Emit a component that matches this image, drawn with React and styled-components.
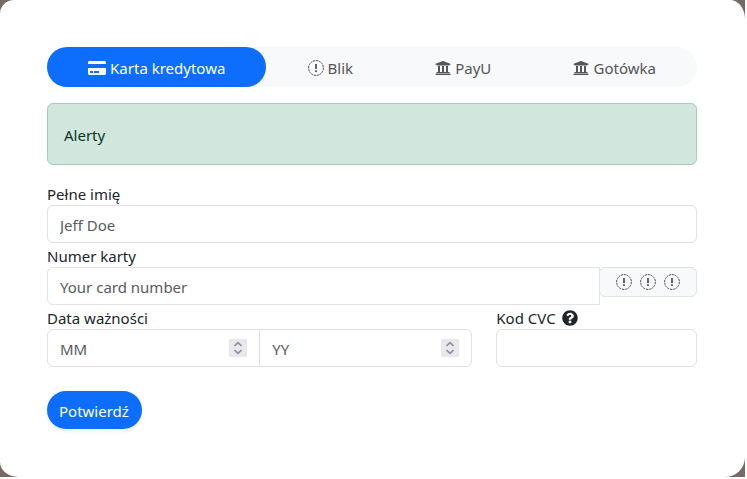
import React from "react";
import styled, { createGlobalStyle } from "styled-components";
import { FaCreditCard, FaUniversity, FaQuestionCircle } from "react-icons/fa";

const GlobalStyle = createGlobalStyle`
  *, *::before, *::after { box-sizing: border-box; }
  body {
    margin: 0;
    background: #fff;
    color: #212529;
    font: 15px/24px "Noto Sans", "Segoe UI", sans-serif;
  }
  button, input { font: inherit; color: inherit; }
`;

const Page = styled.div`
  margin-right: 2px;
  background: #796965;
`;

const Card = styled.main`
  padding: 47px 48px 48px 47px;
  background: #fff;
  border-radius: 14px 15px 20px 18px / 14px 19px 20px 15px;
`;

const Tabs = styled.nav`
  display: flex;
  margin-bottom: 16px;
  border-radius: 20px;
  background: #f8f9fa;
`;

const Tab = styled.button`
  flex: 1 1 auto;
  display: flex;
  align-items: center;
  justify-content: center;
  gap: 4px;
  padding: 9px 16px 7px;
  border: 0;
  border-radius: 20px;
  background: ${(p) => (p.$active ? "#0d6efd" : "transparent")};
  color: ${(p) => (p.$active ? "#fff" : "#555")};
  cursor: pointer;
  svg { flex: none; }
`;

const Alert = styled.div`
  margin-bottom: 16px;
  padding: 19px 16px 17px;
  border: 1px solid #a3cfbb;
  border-radius: 6px;
  background: #d1e7dd;
  color: #0a3622;
`;

const Label = styled.label`
  display: flex;
  align-items: center;
  gap: 6px;
  height: 24px;
  padding-top: 2px;
`;

const Input = styled.input`
  display: block;
  width: 100%;
  min-width: 0;
  height: 38px;
  padding: 8px 12px 6px;
  border: 1px solid #dee2e6;
  border-radius: ${(p) => p.$radius || "6px"};
  background: #fff;
  outline: 0;
  appearance: textfield;
  &::placeholder { color: #595c5f; opacity: 1; }
  &::-webkit-inner-spin-button, &::-webkit-outer-spin-button { appearance: none; margin: 0; }
  &:focus { border-color: #86b7fe; }
`;

const InputGroup = styled.div`
  display: flex;
  align-items: flex-start;
`;

const Addon = styled.div`
  display: flex;
  flex: none;
  gap: 8px;
  margin-left: -1px;
  padding: 6px 16px;
  border: 1px solid #dee2e6;
  border-radius: 6px;
  background: #f8f9fa;
  color: #555;
`;

const Row = styled.div`
  display: grid;
  grid-template-columns: repeat(12, 1fr);
  column-gap: 24px;
`;

const Column = styled.div`
  grid-column: span ${(p) => p.$span};
  min-width: 0;
`;

const DateField = styled.div`
  position: relative;
  flex: 1;
  & + & { margin-left: -1px; }
`;

const Stepper = styled.svg`
  position: absolute;
  right: 13px;
  top: 10px;
  width: 18px;
  height: 18px;
  background: #e9e9ed;
  pointer-events: none;
`;

const Submit = styled.button`
  display: block;
  height: 38px;
  margin-top: 24px;
  padding: 2px 13px 0 12px;
  border: 0;
  border-radius: 19px;
  background: #0d6efd;
  color: #fff;
  box-shadow: 0 2px 4px rgba(0, 0, 0, 0.075);
  cursor: pointer;
`;

const DashedNotice = () => (
  <svg width="16" height="16" viewBox="0 0 16 16" fill="none" stroke="currentColor" aria-hidden="true">
    <circle cx="8" cy="8" r="7.4" strokeDasharray="2.2 0.67" />
    <path d="M8 4v5" strokeWidth="1.8" />
    <path d="M8 10.2v1.8" strokeWidth="1.8" />
  </svg>
);

const Arrows = () => (
  <Stepper viewBox="0 0 18 18" fill="none" stroke="#8f8f9d" strokeWidth="1.7" aria-hidden="true">
    <path d="M5.5 6.8 9 3.7l3.5 3.1M5.5 11.2 9 14.3l3.5-3.1" />
  </Stepper>
);

export default function App() {
  return (
    <>
      <GlobalStyle />
      <Page>
        <Card>
          <Tabs aria-label="Metoda płatności">
            <Tab type="button" $active aria-current="true"><FaCreditCard size={18} />Karta kredytowa</Tab>
            <Tab type="button"><DashedNotice />Blik</Tab>
            <Tab type="button"><FaUniversity size={16} />PayU</Tab>
            <Tab type="button"><FaUniversity size={16} />Gotówka</Tab>
          </Tabs>
          <Alert role="status">Alerty</Alert>
          <form onSubmit={(e) => e.preventDefault()}>
            <Label htmlFor="name">Pełne imię</Label>
            <Input id="name" placeholder="Jeff Doe" />
            <Label htmlFor="number">Numer karty</Label>
            <InputGroup>
              <Input id="number" placeholder="Your card number" $radius="6px 0 0 6px" />
              <Addon><DashedNotice /><DashedNotice /><DashedNotice /></Addon>
            </InputGroup>
            <Row>
              <Column $span={8}>
                <Label htmlFor="month">Data ważności</Label>
                <InputGroup>
                  <DateField>
                    <Input id="month" type="number" placeholder="MM" $radius="6px 0 0 6px" />
                    <Arrows />
                  </DateField>
                  <DateField>
                    <Input type="number" placeholder="YY" aria-label="Rok ważności" $radius="0 6px 6px 0" />
                    <Arrows />
                  </DateField>
                </InputGroup>
              </Column>
              <Column $span={4}>
                <Label htmlFor="cvc">Kod CVC <FaQuestionCircle size={16} aria-hidden="true" /></Label>
                <Input id="cvc" />
              </Column>
            </Row>
            <Submit type="submit">Potwierdź</Submit>
          </form>
        </Card>
      </Page>
    </>
  );
}
